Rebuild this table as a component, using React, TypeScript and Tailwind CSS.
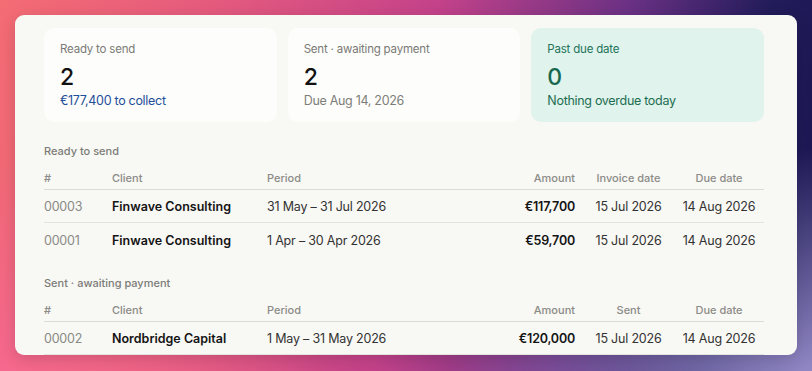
import React from "react";

type Row = {
  id: string;
  client: string;
  period: string;
  amount: string;
  date: string;
  due: string;
};

const ready: Row[] = [
  { id: "00003", client: "Finwave Consulting", period: "31 May – 31 Jul 2026", amount: "€117,700", date: "15 Jul 2026", due: "14 Aug 2026" },
  { id: "00001", client: "Finwave Consulting", period: "1 Apr – 30 Apr 2026", amount: "€59,700", date: "15 Jul 2026", due: "14 Aug 2026" },
];

const sent: Row[] = [
  { id: "00002", client: "Nordbridge Capital", period: "1 May – 31 May 2026", amount: "€120,000", date: "15 Jul 2026", due: "14 Aug 2026" },
];

const cols = "grid grid-cols-[68px_155px_216px_100px_91px_90px]";

function StatCard({
  label,
  value,
  sub,
  tone = "default",
}: {
  label: string;
  value: string;
  sub: string;
  tone?: "default" | "blue" | "green";
}) {
  const green = tone === "green";
  return (
    <div
      className={`h-[94px] rounded-[10px] px-4 pt-[13px] ${
        green ? "bg-[#e0f3ec]" : "bg-[#fdfdfb]"
      }`}
    >
      <div className={`text-[11.5px] leading-4 tracking-[-0.2px] ${green ? "text-[#23735a]" : "text-[#7a7a76]"}`}>
        {label}
      </div>
      <div className={`mt-[6px] text-[23px] leading-7 font-medium ${green ? "text-[#16684f]" : "text-[#111]"}`}>
        {value}
      </div>
      <div
        className={`mt-[1px] text-[12.5px] leading-[18px] tracking-[-0.3px] ${
          green ? "text-[#1d6d52]" : tone === "blue" ? "text-[#1f4f99]" : "text-[#7d7d79]"
        }`}
      >
        {sub}
      </div>
    </div>
  );
}

function InvoiceTable({ title, dateLabel, rows, lastBorder }: { title: string; dateLabel: string; rows: Row[]; lastBorder?: boolean }) {
  return (
    <div>
      <div className="text-[11px] leading-4 font-medium text-[#7c7c78]">{title}</div>
      <div className={`${cols} mt-[7px] h-6 items-center border-b border-[#dcdcd7] pt-[2px] text-[11px] font-medium text-[#8b8b87]`}>
        <div>#</div>
        <div>Client</div>
        <div>Period</div>
        <div className="pr-2 text-right">Amount</div>
        <div className="text-center">{dateLabel}</div>
        <div className="text-center">Due date</div>
      </div>
      {rows.map((r, i) => (
        <div
          key={r.id}
          className={`${cols} h-[33px] items-center pt-[3px] text-[12.5px] tracking-[-0.2px] ${
            i < rows.length - 1 || lastBorder ? "border-b border-[#e4e4df]" : ""
          }`}
        >
          <div className="text-[#8a8a86]">{r.id}</div>
          <div className="font-semibold tracking-normal text-[#141414]">{r.client}</div>
          <div className="text-[#333]">{r.period}</div>
          <div className="pr-2 text-right font-semibold text-[#141414]">{r.amount}</div>
          <div className="text-center text-[#333]">{r.date}</div>
          <div className="text-center text-[#333]">{r.due}</div>
        </div>
      ))}
    </div>
  );
}

export default function App() {
  return (
    <div
      className="h-[371px] w-[812px] overflow-hidden pl-[15px] pt-[15px] font-['Inter',sans-serif]"
      style={{
        background:
          "radial-gradient(ellipse 45% 60% at 100% 100%, #9288c6 0%, rgba(120,100,180,0) 100%), radial-gradient(ellipse 40% 55% at 0% 100%, #f6688e 0%, rgba(246,104,142,0) 100%), linear-gradient(100deg, #f46c74 0%, #e45a7e 25%, #c4428a 50%, #6a3184 72%, #221c5a 88%, #1a1752 100%)",
      }}
    >
      <div className="h-[340px] w-[782px] overflow-hidden rounded-[9px] bg-[#f8f8f4] pl-[29px] pt-[13px] shadow-[0_4px_16px_rgba(0,0,0,0.15)]">
        <div className="w-[720px]">
          <div className="grid grid-cols-3 gap-[11px]">
            <StatCard label="Ready to send" value="2" sub="€177,400 to collect" tone="blue" />
            <StatCard label="Sent · awaiting payment" value="2" sub="Due Aug 14, 2026" />
            <StatCard label="Past due date" value="0" sub="Nothing overdue today" tone="green" />
          </div>
          <div className="mt-[21px]">
            <InvoiceTable title="Ready to send" dateLabel="Invoice date" rows={ready} />
          </div>
          <div className="mt-[19px]">
            <InvoiceTable title="Sent · awaiting payment" dateLabel="Sent" rows={sent} lastBorder />
          </div>
        </div>
      </div>
    </div>
  );
}
